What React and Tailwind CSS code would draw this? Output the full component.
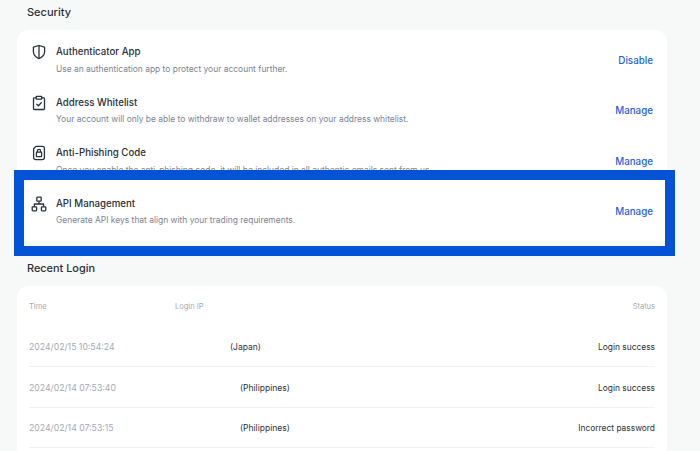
const font = { fontFamily: '"Inter", "Noto Sans", sans-serif' };

const Shield = () => (
  <svg width="16" height="16" viewBox="0 0 16 16" fill="none" stroke="#2b3139" strokeWidth="1.3" strokeLinejoin="round">
    <path d="M8 1.5 13.6 3.2V7.6C13.6 11 11 13.4 8 14.6 5 13.4 2.4 11 2.4 7.6V3.2Z" />
    <path d="M8 1.5V14.6" />
  </svg>
);
const Clip = () => (
  <svg width="16" height="16" viewBox="0 0 16 16" fill="none" stroke="#2b3139" strokeWidth="1.3" strokeLinejoin="round" strokeLinecap="round">
    <path d="M5.2 2.8H3.4a.9.9 0 0 0-.9.9v9.9c0 .5.4.9.9.9h9.2c.5 0 .9-.4.9-.9V3.700a.9.9 0 0 0-.9-.9h-1.800" />
    <rect x="5.200" y="1.400" width="5.600" height="2.800" rx=".6" />
    <path d="M5.800 9.200 7.400 10.700 10.300 7.800" />
  </svg>
);
const FileLock = () => (
  <svg width="16" height="16" viewBox="0 0 16 16" fill="none" stroke="#2b3139" strokeWidth="1.3" strokeLinejoin="round">
    <path d="M5 1.400H11.400C12.500 1.400 13.400 2.300 13.400 3.400V12.600C13.400 13.700 12.500 14.600 11.400 14.600H4.600C3.500 14.600 2.600 13.700 2.600 12.600V3.800Z" />
    <rect x="5.400" y="7.200" width="5.200" height="4.400" rx=".6" />
    <path d="M6.400 7.200V5.900a1.600 1.600 0 0 1 3.200 0V7.200" />
  </svg>
);
const Net = () => (
  <svg width="16" height="16" viewBox="0 0 16 16" fill="none" stroke="#2b3139" strokeWidth="1.3" strokeLinejoin="round">
    <rect x="5.800" y="1.200" width="4.400" height="4" rx=".7" />
    <rect x="1.200" y="10.800" width="4.400" height="4" rx=".7" />
    <rect x="10.400" y="10.800" width="4.400" height="4" rx=".7" />
    <path d="M8 5.200V8M3.400 10.800V8H12.600V10.800" />
  </svg>
);

const items = [
  { icon: <Shield />, title: "Authenticator App", desc: "Use an authentication app to protect your account further.", action: "Disable" },
  { icon: <Clip />, title: "Address Whitelist", desc: "Your account will only be able to withdraw to wallet addresses on your address whitelist.", action: "Manage" },
  { icon: <FileLock />, title: "Anti-Phishing Code", desc: "Once you enable the anti-phishing code, it will be included in all authentic emails sent from us.", action: "Manage" },
  { icon: <Net />, title: "API Management", desc: "Generate API keys that align with your trading requirements.", action: "Manage" },
];

const logins = [
  { time: "2024/02/15 10:54:24", place: "(Japan)", pad: "pl-[55px]", status: "Login success" },
  { time: "2024/02/14 07:53:40", place: "(Philippines)", pad: "pl-[65px]", status: "Login success" },
  { time: "2024/02/14 07:53:15", place: "(Philippines)", pad: "pl-[65px]", status: "Incorrect password" },
];

export default function App() {
  return (
    <div style={font} className="relative h-[451px] w-[700px] overflow-hidden bg-[#f7f8f8]">
      <div className="pl-[17px] pr-[33px]">
        <h2 className="pl-[10px] pt-[4px] text-[11px] leading-[16px] font-medium text-[#2b3139]">Security</h2>
        <div className="mt-[10px] h-[211px] rounded-t-[12px] rounded-b-[6px] bg-white pl-[14px] pr-[14px] pt-[14px]">
          {items.map((it) => (
            <div key={it.title} className="flex h-[50.500px] items-start">
              <div className="w-[25px]">{it.icon}</div>
              <div className="min-w-0 flex-1">
                <div className="text-[9.700px] leading-[16px] font-medium text-[#2b3139]">{it.title}</div>
                <div className="mt-[1.500px] text-[8.450px] leading-[14px] text-[#7b8494]">{it.desc}</div>
              </div>
              <div className="pt-[9.500px] text-[9.800px] leading-[14px] font-medium text-[#1f62dc]">{it.action}</div>
            </div>
          ))}
        </div>
        <h2 className="pl-[10px] pt-[19px] text-[10.900px] leading-[16px] font-medium text-[#2b3139]">Recent Login</h2>
        <div className="mt-[10px] rounded-t-[12px] bg-white px-[12px] pt-[15px] pb-[20px]">
          <div className="flex h-[12px] items-center text-[7.500px] leading-[12px] text-[#a3aab5]">
            <div className="w-[146px]">Time</div>
            <div className="flex-1">Login IP</div>
            <div>Status</div>
          </div>
          <div className="mt-[14px]">
            {logins.map((l) => (
              <div key={l.time} className="flex h-[40.400px] items-center border-b border-[#f1f2f3] pt-[2px]">
                <div className="w-[146px] text-[8.700px] text-[#a3aab5]">{l.time}</div>
                <div className={`flex-1 text-[8.500px] text-[#2b3139] ${l.pad}`}>{l.place}</div>
                <div className="text-[8.400px] text-[#2b3139]">{l.status}</div>
              </div>
            ))}
          </div>
        </div>
      </div>
      <div className="absolute left-[14px] top-[170px] h-[86px] w-[661px] border-[10px] border-[#0453d6]" />
    </div>
  );
}
